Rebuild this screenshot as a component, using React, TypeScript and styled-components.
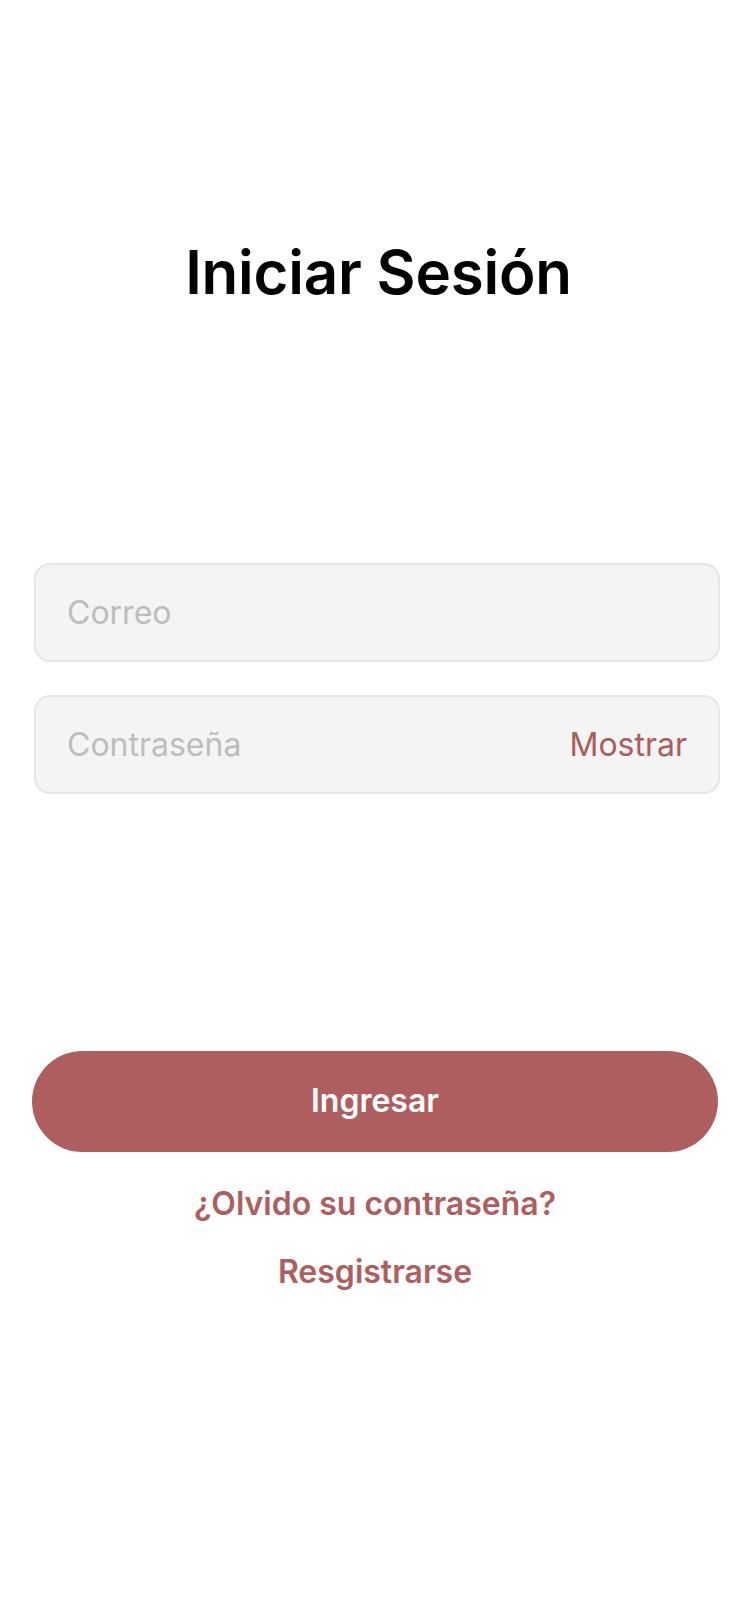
import React from "react";
import styled, { createGlobalStyle } from "styled-components";

const Global = createGlobalStyle`
  html, body { margin: 0; padding: 0; background: #ffffff; }
  body { font-family: Inter, "Noto Sans", sans-serif; }
  * { box-sizing: border-box; }
`;

const Page = styled.div`
  min-height: 1624px;
  display: flex;
  flex-direction: column;
  padding: 0 32px;
  background: #ffffff;
`;

const Title = styled.h1`
  margin: 236px 0 0;
  padding-left: 7px;
  font-size: 60px;
  line-height: 72px;
  font-weight: 600;
  color: #000000;
  text-align: center;
  letter-spacing: -0.2px;
`;

const Form = styled.div`
  margin: 255px -2px 0 2px;
  display: flex;
  flex-direction: column;
  gap: 33px;
`;

const Field = styled.div`
  height: 99px;
  display: flex;
  align-items: center;
  justify-content: space-between;
  padding: 0 31px;
  background: #f4f4f4;
  border: 2px solid #e6e6e6;
  border-radius: 16px;
`;

const Placeholder = styled.span`
  font-size: 32px;
  color: #bdbdbd;
`;

const Toggle = styled.span`
  font-size: 32px;
  color: #ad5c5c;
`;

const Submit = styled.button`
  margin-top: 257px;
  height: 101px;
  width: 100%;
  border: none;
  border-radius: 51px;
  background: #ae5e5e;
  color: #ffffff;
  font-family: inherit;
  font-size: 32px;
  font-weight: 600;
  padding: 0 0 2px;
`;

const LinkText = styled.div<{ $gap: number }>`
  margin-top: ${(p) => p.$gap}px;
  font-size: 32px;
  line-height: 40px;
  font-weight: 600;
  color: #ae5e5e;
  text-align: center;
`;

export default function App() {
  return (
    <>
      <Global />
      <Page>
        <Title>Iniciar Sesión</Title>
        <Form>
          <Field>
            <Placeholder>Correo</Placeholder>
          </Field>
          <Field>
            <Placeholder>Contraseña</Placeholder>
            <Toggle>Mostrar</Toggle>
          </Field>
        </Form>
        <Submit>Ingresar</Submit>
        <LinkText $gap={32}>¿Olvido su contraseña?</LinkText>
        <LinkText $gap={28}>Resgistrarse</LinkText>
      </Page>
    </>
  );
}
